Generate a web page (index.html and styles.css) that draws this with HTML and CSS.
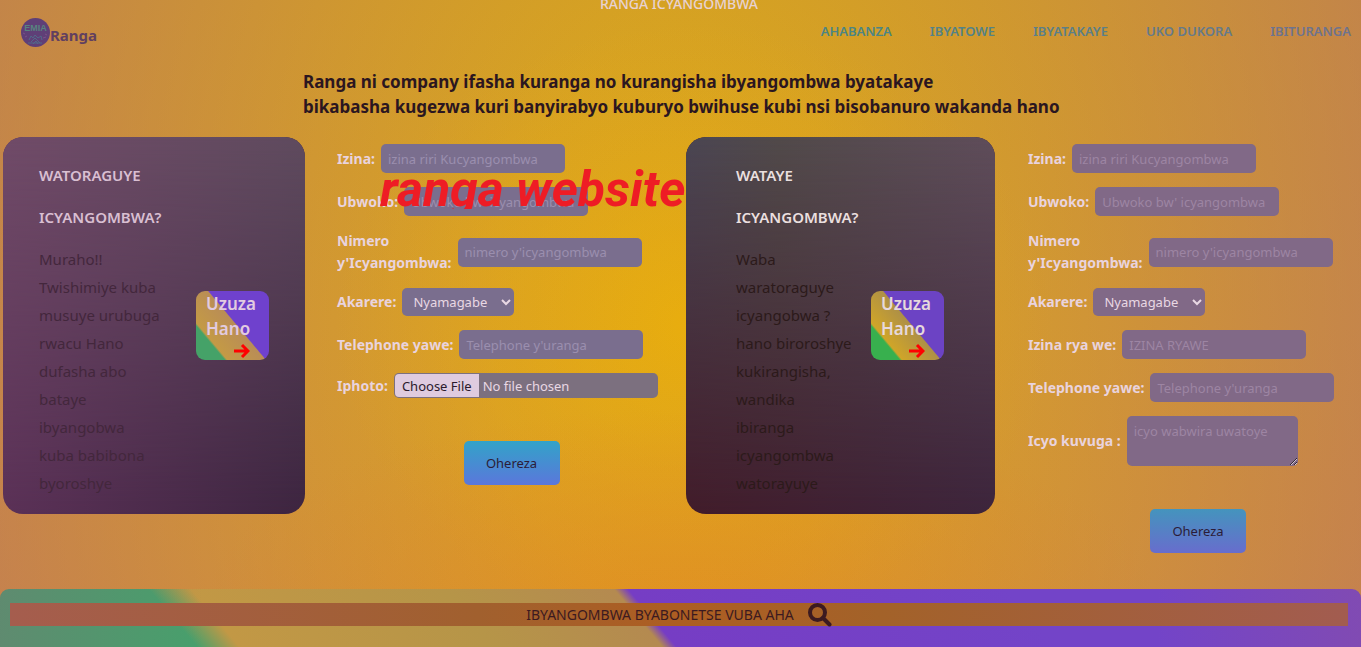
FILE: index.html
```html
<!DOCTYPE html>
<html lang="rw">
<head>
<meta charset="utf-8">
<meta name="viewport" content="width=device-width, initial-scale=1">
<title>Ranga</title>
<link rel="stylesheet" href="styles.css">
</head>
<body>
<header class="header">
  <p class="banner">RANGA ICYANGOMBWA</p>
  <div class="bar">
    <a class="brand" href="#">
      <svg class="logo" viewBox="0 0 29 29" aria-hidden="true">
        <circle cx="14.500" cy="14.500" r="14.500" fill="#5f3f77"/>
        <text x="14.500" y="13" text-anchor="middle" class="logo-text">EMIA</text>
        <g fill="none" stroke="#52698a" stroke-width="1">
          <path d="M8 22l2-4 2 2 2-3 3 3 3-2 1 4M7 25h14M10 24l4-4 5 5M12 26l3-3 2 3"/>
          <path d="M2 15l2 1M4 19l2-1M24 16l2 1M22 20l3-1" stroke="#7b5189"/>
        </g>
      </svg>
      <span>Ranga</span>
    </a>
    <nav class="nav">
      <a class="n1" href="#">AHABANZA</a>
      <a class="n2" href="#">IBYATOWE</a>
      <a class="n3" href="#">IBYATAKAYE</a>
      <a class="n4" href="#">UKO DUKORA</a>
      <a class="n5" href="#">IBITURANGA</a>
    </nav>
  </div>
</header>
<h1 class="intro">Ranga ni company ifasha kuranga no kurangisha ibyangombwa byatakaye<br>bikabasha kugezwa kuri banyirabyo kuburyo bwihuse kubi nsi bisobanuro wakanda hano</h1>
<main class="columns">
  <section class="card found">
    <div class="copy">
      <h2>WATORAGUYE<br>ICYANGOMBWA?</h2>
      <p>Muraho!!<br>Twishimiye kuba<br>musuye urubuga<br>rwacu Hano<br>dufasha abo<br>bataye<br>ibyangobwa<br>kuba babibona<br>byoroshye</p>
    </div>
    <a class="more" href="#">Uzuza<br>Hano
      <svg viewBox="0 0 16 16" aria-hidden="true"><path d="M0 8h14M8 2l6 6-6 6"/></svg>
    </a>
  </section>
  <form class="form">
    <div class="row"><label for="a1">Izina:</label><input id="a1" type="text" placeholder="izina riri Kucyangombwa"></div>
    <div class="row"><label for="a2">Ubwoko:</label><input id="a2" type="text" placeholder="Ubwoko bw' icyangombwa"></div>
    <div class="row"><label for="a3">Nimero<br>y'Icyangombwa:</label><input id="a3" type="text" placeholder="nimero y'icyangombwa"></div>
    <div class="row"><label for="a4">Akarere:</label><select id="a4"><option>Nyamagabe</option></select></div>
    <div class="row"><label for="a5">Telephone yawe:</label><input id="a5" type="tel" placeholder="Telephone y'uranga"></div>
    <div class="row"><label for="a6">Iphoto:</label><input id="a6" type="file"></div>
    <button class="send" type="button">Ohereza</button>
    <span class="watermark">ranga website</span>
  </form>
  <section class="card lost">
    <div class="copy">
      <h2>WATAYE<br>ICYANGOMBWA?</h2>
      <p>Waba<br>waratoraguye<br>icyangobwa ?<br>hano biroroshye<br>kukirangisha,<br>wandika<br>ibiranga<br>icyangombwa<br>watorayuye</p>
    </div>
    <a class="more" href="#">Uzuza<br>Hano
      <svg viewBox="0 0 16 16" aria-hidden="true"><path d="M0 8h14M8 2l6 6-6 6"/></svg>
    </a>
  </section>
  <form class="form last">
    <div class="row"><label for="b1">Izina:</label><input id="b1" type="text" placeholder="izina riri Kucyangombwa"></div>
    <div class="row"><label for="b2">Ubwoko:</label><input id="b2" type="text" placeholder="Ubwoko bw' icyangombwa"></div>
    <div class="row"><label for="b3">Nimero<br>y'Icyangombwa:</label><input id="b3" type="text" placeholder="nimero y'icyangombwa"></div>
    <div class="row"><label for="b4">Akarere:</label><select id="b4"><option>Nyamagabe</option></select></div>
    <div class="row"><label for="b5">Izina rya we:</label><input id="b5" type="text" placeholder="IZINA RYAWE"></div>
    <div class="row"><label for="b6">Telephone yawe:</label><input id="b6" type="tel" placeholder="Telephone y'uranga"></div>
    <div class="row"><label for="b7">Icyo kuvuga :</label><textarea id="b7" placeholder="icyo wabwira uwatoye"></textarea></div>
    <button class="send" type="button">Ohereza</button>
  </form>
</main>
<section class="recent">
  <div class="recent-bar">
    <span>IBYANGOMBWA BYABONETSE VUBA AHA</span>
    <svg viewBox="0 0 24 24" aria-hidden="true"><circle cx="9.500" cy="9.500" r="7.500"/><path d="M15 15l6.500 6.500"/></svg>
  </div>
</section>
</body>
</html>
```
FILE: styles.css
```css
* { box-sizing: border-box; }

body {
  margin: 0;
  min-height: 100vh;
  display: flex;
  flex-direction: column;
  overflow: hidden;
  font-family: "Noto Sans", "Open Sans", sans-serif;
  color: #2f1a2a;
  background:
    radial-gradient(ellipse 54vw 180vh at 50% 50%, rgba(165, 87, 135, 0) 0, rgba(165, 87, 135, 0.06) 25%, rgba(165, 87, 135, 0.2) 54%, rgba(165, 87, 135, 0.44) 100%),
    radial-gradient(ellipse 480px 200px at 50% 94%, #e4951c, rgba(228, 149, 28, 0)),
    radial-gradient(ellipse 360px 300px at 51% 50%, #e8ad0e, rgba(232, 173, 14, 0)),
    linear-gradient(#d9a71b, #dba521 50%, #dda025);
}

h1, h2, p { margin: 0; }
a { text-decoration: none; color: inherit; }

.header { height: 69px; }
.banner {
  line-height: 20px;
  margin-top: -6px;
  padding-right: 3px;
  text-align: center;
  font-size: 14px;
  font-weight: 500;
  color: #e8d2d2;
}
.bar {
  display: flex;
  justify-content: space-between;
  align-items: flex-start;
  padding: 0 10px 0 21px;
}
.brand {
  display: flex;
  align-items: flex-start;
  margin-top: 4px;
  font-size: 15px;
  font-weight: 700;
  line-height: 34px;
  color: #613f60;
}
.logo { width: 29px; height: 29px; }
.logo-text { font: 700 9px "Liberation Sans", sans-serif; fill: #57837f; }
.nav {
  display: flex;
  gap: 38px;
  padding-top: 7px;
  font-size: 13px;
  font-weight: 600;
  line-height: 20px;
}
.n1 { color: #4c8584; }
.n2 { color: #538287; }
.n3 { color: #5b7f88; }
.n4 { color: #657a8b; }
.n5 { color: #6e738e; }

.intro {
  padding: 0 303px;
  white-space: nowrap;
  font-size: 17px;
  font-weight: 700;
  line-height: 25px;
  color: #2b1620;
}

.columns {
  display: grid;
  grid-template-columns: 302fr 381fr 309fr 366fr;
  align-items: start;
  margin-top: 18px;
  padding-left: 3px;
}

.card {
  position: relative;
  isolation: isolate;
  display: flex;
  align-items: center;
  padding: 17px 0;
  border-radius: 20px;
  overflow: hidden;
}
.card::before {
  content: "";
  position: absolute;
  inset: 0;
  z-index: -1;
  mask-image: linear-gradient(#000, transparent);
}
.found { padding-left: 36px; background: linear-gradient(to right, #5b3157, #3d2540); }
.found::before { background: linear-gradient(to right, #704b68, #5f4b5e); }
.lost { padding-left: 50px; background: linear-gradient(to right, #421c2a, #3d253c); }
.lost::before { background: linear-gradient(to right, #4b4653, #514a4a 30%, #5f4d5a); }
.copy { width: 157px; white-space: nowrap; }
.lost .copy { width: 135px; }
.card h2 { font-size: 15px; font-weight: 600; line-height: 42px; color: #d9bfd2; }
.lost h2 { color: #eadfdf; }
.card p { margin-top: 7px; font-size: 15px; line-height: 28px; color: #43273c; }
.lost p { color: #2c1a1a; }
.more {
  display: block;
  width: 73px;
  height: 69px;
  padding-left: 10px;
  border-radius: 9px;
  font-size: 17px;
  font-weight: 600;
  line-height: 25px;
  color: #e2cbe0;
  background: linear-gradient(50deg, #45a268 22%, #c49a45 24%, #b98d56 53%, #6f41cd 54%);
}
.lost .more {
  color: #e6d9dc;
  background: linear-gradient(50deg, #38b04e 22%, #d0a528 24%, #ae9046 53%, #6c43c4 54%);
}
.more svg {
  display: block;
  width: 16px;
  height: 16px;
  margin: 2px 0 0 28px;
  fill: none;
  stroke: #f00;
  stroke-width: 3;
}

.form {
  position: relative;
  display: flex;
  flex-direction: column;
  gap: 14px;
  padding: 7px 0 0 32px;
  font-size: 14px;
}
.last { margin-right: -7px; padding-left: 33px; }
.row { display: flex; align-items: center; gap: 6px; }
.row label { font-weight: 700; line-height: 22px; color: #e9d3de; white-space: nowrap; }
.row input, .row select, .row textarea {
  font: 13px "Noto Sans", "Open Sans", sans-serif;
  color: #e9d8e4;
  background: #7a6e8e;
  border: 0;
  border-radius: 5px;
  outline: 0;
}
.last .row input, .last .row select, .last .row textarea { background: #816987; }
.row input { width: 184px; height: 29px; padding: 0 7px; }
.row select { width: 112px; height: 28px; padding: 0 0 0 7px; }
.row textarea { width: 171px; height: 50px; padding: 6px 7px; }
.row ::placeholder { color: #9b8fae; opacity: 1; }
.last .row ::placeholder { color: #9d85a3; }
.row input[type="file"] { width: 264px; height: 25px; padding: 1px; line-height: 23px; background: #7c707f; }
.row ::file-selector-button {
  height: 23px;
  margin: 0 4px 0 0;
  padding: 0 7px;
  border: 0;
  border-radius: 4px 0 0 4px;
  font: 13px "Noto Sans", "Open Sans", sans-serif;
  color: #2b1a2c;
  background: #dfcbdf;
}
.send {
  align-self: center;
  width: 96px;
  height: 44px;
  margin-top: 29px;
  border: 0;
  border-radius: 5px;
  font: 13px "Noto Sans", "Open Sans", sans-serif;
  color: #2b1c38;
  background: linear-gradient(#32a3c8, #5b77db);
}
.last .send { background: linear-gradient(#4494bd, #686dcd); }
.watermark {
  position: absolute;
  right: 0;
  top: 26px;
  width: 306px;
  height: 46px;
  overflow: hidden;
  white-space: nowrap;
  font: italic 700 50px/52px Roboto, sans-serif;
  color: #ee1c25;
  pointer-events: none;
}

.recent {
  flex: 1;
  min-height: 58px;
  margin-top: 36px;
  padding: 14px 13px 0 10px;
  border-radius: 9px 9px 0 0;
  background:
    linear-gradient(to right, rgba(150, 90, 120, 0.3), rgba(150, 90, 120, 0) 15% 85%, rgba(160, 90, 130, 0.3)),
    linear-gradient(50deg, #47a06c 14%, #c29845 17%, #b69548 35%, #b48a50 47%, #763dc4 48%, #7344c8 75%);
}
.recent-bar {
  display: flex;
  justify-content: center;
  align-items: center;
  gap: 14px;
  height: 23px;
  font-size: 14px;
  color: #3c1a20;
  background: linear-gradient(to right, #a55d4e, #a1602e 35%, #ad5e22 50%, #a36229 65%, #a25c50);
}
.recent-bar svg { width: 24px; height: 24px; fill: none; stroke: #3c1a20; stroke-width: 4; stroke-linecap: round; }
```
